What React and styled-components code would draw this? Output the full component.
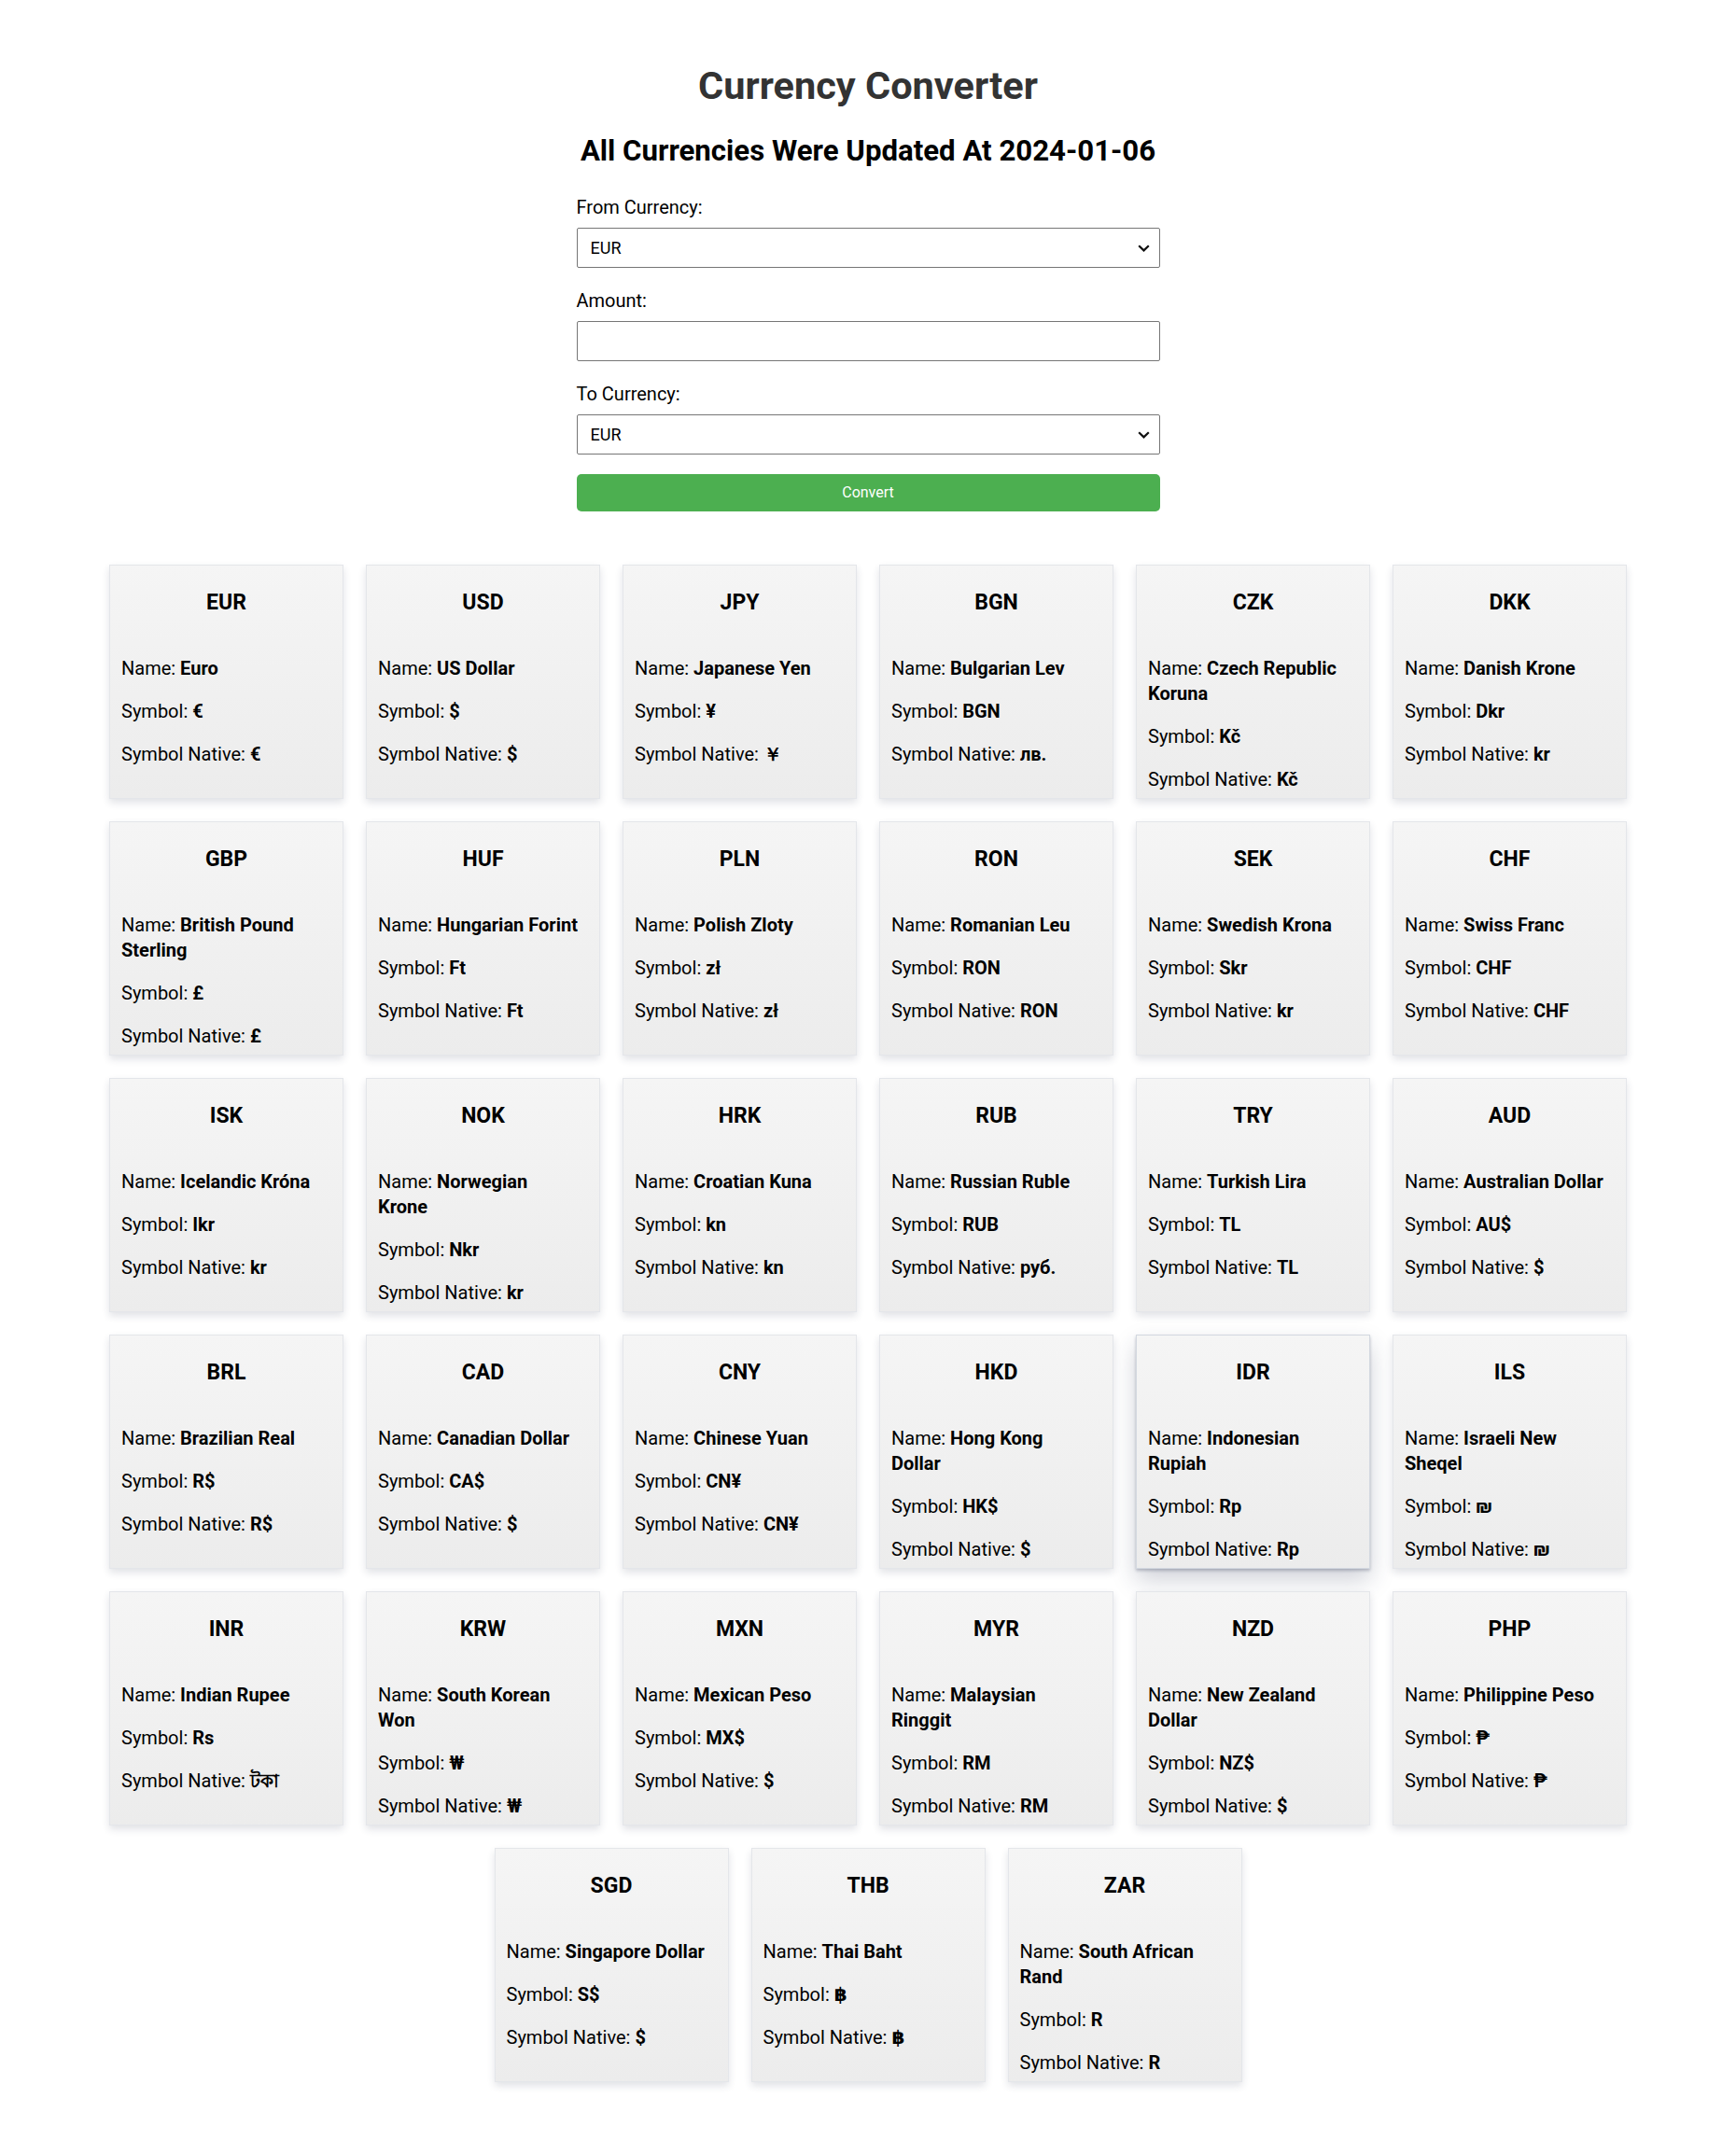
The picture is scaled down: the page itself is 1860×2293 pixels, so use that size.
import React from "react";
import styled, { createGlobalStyle } from "styled-components";

const Global = createGlobalStyle`
  html, body { margin: 0; padding: 0; background: #fff; }
  body { font-family: Roboto, "Open Sans", "DejaVu Sans", sans-serif; color: #000; }
`;

const Page = styled.div`
  padding: 68px 8px 61px;
`;

const Title = styled.h1`
  margin: 0;
  font-size: 41.5px;
  line-height: 48px;
  font-weight: 700;
  color: #333;
  text-align: center;
`;

const Subtitle = styled.h2`
  margin: 28px 0 0;
  font-size: 31.2px;
  line-height: 36px;
  font-weight: 700;
  color: #000;
  text-align: center;
`;

const Form = styled.form`
  width: 625px;
  margin: 0 auto;
  display: flex;
  flex-direction: column;
`;

const Label = styled.label`
  display: block;
  font-size: 20px;
  line-height: 24px;
  margin: ${(p) => (p.$first ? "30px" : "23.5px")} 0 9.5px;
`;

const SelectWrap = styled.div`
  position: relative;
  height: 43px;
`;

const Select = styled.select`
  appearance: none;
  -webkit-appearance: none;
  width: 100%;
  height: 43px;
  box-sizing: border-box;
  border: 1px solid #767676;
  border-radius: 2px;
  background: #fff;
  padding: 0 14px;
  font-family: inherit;
  font-size: 18px;
  color: #000;
`;

const Chevron = styled.svg`
  position: absolute;
  right: 11px;
  top: 18px;
  pointer-events: none;
`;

const Input = styled.input`
  width: 100%;
  height: 43px;
  box-sizing: border-box;
  border: 1px solid #767676;
  border-radius: 2px;
  background: #fff;
  padding: 0 14px;
  font-family: inherit;
  font-size: 18px;
`;

const Button = styled.button`
  margin-top: 21px;
  height: 40px;
  width: 100%;
  border: none;
  border-radius: 5px;
  background: #4caf50;
  color: #fff;
  font-family: inherit;
  font-size: 16px;
  cursor: pointer;
`;

const Grid = styled.div`
  margin-top: 57px;
  display: flex;
  flex-wrap: wrap;
  justify-content: center;
  gap: 24px;
`;

const Card = styled.div`
  width: 251px;
  height: 251px;
  box-sizing: border-box;
  padding: 0 21px 0 12px;
  border: 1px solid ${(p) => (p.$hover ? "#d3d8e0" : "#e4e6ea")};
  background: linear-gradient(180deg, #f5f5f5 0%, #ececec 100%);
  box-shadow: ${(p) =>
    p.$hover
      ? "0 12px 24px rgba(40, 50, 80, 0.22), 0 2px 3px rgba(40,50,80,0.28)"
      : "0 4px 8px rgba(40, 50, 80, 0.14)"};
`;

const Code = styled.h3`
  margin: 26px -9px 43.5px 0;
  font-size: 23px;
  line-height: 28px;
  font-weight: 700;
  text-align: center;
`;

const Line = styled.p`
  margin: 0 0 19px;
  font-size: 20px;
  line-height: 27px;
`;

const Value = styled.strong`
  font-weight: 700;
`;

const currencies = [
  ["EUR", "Euro", "€", "€"],
  ["USD", "US Dollar", "$", "$"],
  ["JPY", "Japanese Yen", "¥", "￥"],
  ["BGN", "Bulgarian Lev", "BGN", "лв."],
  ["CZK", "Czech Republic Koruna", "Kč", "Kč"],
  ["DKK", "Danish Krone", "Dkr", "kr"],
  ["GBP", "British Pound Sterling", "£", "£"],
  ["HUF", "Hungarian Forint", "Ft", "Ft"],
  ["PLN", "Polish Zloty", "zł", "zł"],
  ["RON", "Romanian Leu", "RON", "RON"],
  ["SEK", "Swedish Krona", "Skr", "kr"],
  ["CHF", "Swiss Franc", "CHF", "CHF"],
  ["ISK", "Icelandic Króna", "Ikr", "kr"],
  ["NOK", "Norwegian Krone", "Nkr", "kr"],
  ["HRK", "Croatian Kuna", "kn", "kn"],
  ["RUB", "Russian Ruble", "RUB", "руб."],
  ["TRY", "Turkish Lira", "TL", "TL"],
  ["AUD", "Australian Dollar", "AU$", "$"],
  ["BRL", "Brazilian Real", "R$", "R$"],
  ["CAD", "Canadian Dollar", "CA$", "$"],
  ["CNY", "Chinese Yuan", "CN¥", "CN¥"],
  ["HKD", "Hong Kong Dollar", "HK$", "$"],
  ["IDR", "Indonesian Rupiah", "Rp", "Rp"],
  ["ILS", "Israeli New Sheqel", "₪", "₪"],
  ["INR", "Indian Rupee", "Rs", "টকা"],
  ["KRW", "South Korean Won", "₩", "₩"],
  ["MXN", "Mexican Peso", "MX$", "$"],
  ["MYR", "Malaysian Ringgit", "RM", "RM"],
  ["NZD", "New Zealand Dollar", "NZ$", "$"],
  ["PHP", "Philippine Peso", "₱", "₱"],
  ["SGD", "Singapore Dollar", "S$", "$"],
  ["THB", "Thai Baht", "฿", "฿"],
  ["ZAR", "South African Rand", "R", "R"],
];

function CurrencySelect() {
  return (
    <SelectWrap>
      <Select defaultValue="EUR">
        {currencies.map(([code]) => (
          <option key={code} value={code}>
            {code}
          </option>
        ))}
      </Select>
      <Chevron width="13" height="8" viewBox="0 0 13 8">
        <path d="M1.2 1.2 L6.5 6.4 L11.8 1.2" fill="none" stroke="#111" strokeWidth="2.2" />
      </Chevron>
    </SelectWrap>
  );
}

export default function App() {
  return (
    <Page>
      <Global />
      <Title>Currency Converter</Title>
      <Subtitle>All Currencies Were Updated At 2024-01-06</Subtitle>
      <Form onSubmit={(e) => e.preventDefault()}>
        <Label $first>From Currency:</Label>
        <CurrencySelect />
        <Label>Amount:</Label>
        <Input type="number" />
        <Label>To Currency:</Label>
        <CurrencySelect />
        <Button type="submit">Convert</Button>
      </Form>
      <Grid>
        {currencies.map(([code, name, symbol, native]) => (
          <Card key={code} $hover={code === "IDR"}>
            <Code>{code}</Code>
            <Line>
              Name: <Value>{name}</Value>
            </Line>
            <Line>
              Symbol: <Value>{symbol}</Value>
            </Line>
            <Line>
              Symbol Native: <Value>{native}</Value>
            </Line>
          </Card>
        ))}
      </Grid>
    </Page>
  );
}
